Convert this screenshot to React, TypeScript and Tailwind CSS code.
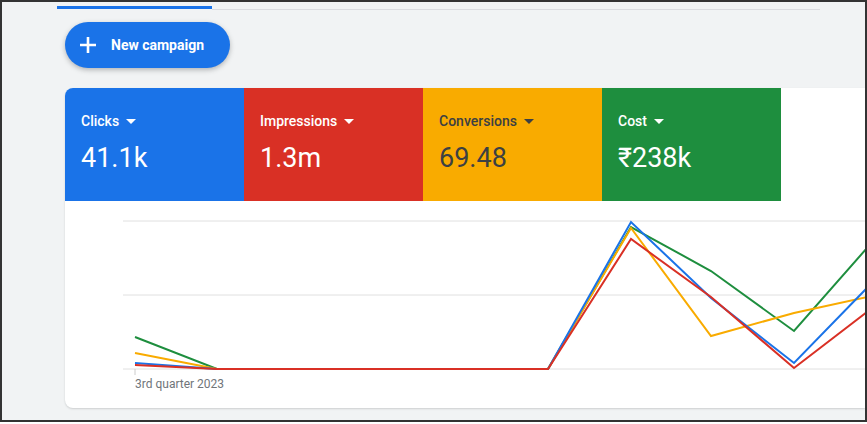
import React from "react";

const tiles = [
  { label: "Clicks", value: "41.1k", bg: "bg-[#1a73e8]", text: "text-white" },
  { label: "Impressions", value: "1.3m", bg: "bg-[#d93025]", text: "text-white" },
  { label: "Conversions", value: "69.48", bg: "bg-[#f9ab00]", text: "text-[#3c4043]" },
  { label: "Cost", value: "₹238k", bg: "bg-[#1e8e3e]", text: "text-white" },
];

const series = [
  { color: "#1e8e3e", pts: "70,136 152,168 483,168 566,26 646,70 729,130 802,47" },
  { color: "#f9ab00", pts: "70,152 152,168 483,168 566,27 646,135 729,112 802,96" },
  { color: "#1a73e8", pts: "70,162 152,168 483,168 566,21 646,97 729,162 802,87" },
  { color: "#d93025", pts: "70,164 152,168 483,168 566,38 646,96 729,167 802,111" },
];

function Caret() {
  return (
    <svg width="10" height="5" viewBox="0 0 10 5" className="ml-[7px] mt-[1px]">
      <path d="M0 0h10L5 5z" fill="currentColor" />
    </svg>
  );
}

export default function App() {
  return (
    <div className="h-[424px] w-[867px] bg-white font-['Roboto',sans-serif]">
      <div className="flex h-[422px] flex-col overflow-hidden border-2 border-[#333] bg-[#f1f3f4]">
        <div className="flex h-[10px] shrink-0">
          <div className="ml-[55px] mt-[4px] h-[3px] w-[155px] bg-[#1a73e8]" />
          <div className="mr-[45px] mt-[7px] h-px flex-1 bg-[#dadce0]" />
        </div>

        <button className="ml-[63px] mt-[10px] flex h-[46px] w-[165px] shrink-0 items-center rounded-full bg-[#1a73e8] pl-[14px] text-[14px] font-bold text-white shadow-[0_2px_5px_rgba(60,64,67,0.35)]">
          <svg width="18" height="18" viewBox="0 0 18 18">
            <path d="M9 1v16M1 9h16" stroke="white" strokeWidth="2.6" />
          </svg>
          <span className="ml-[14px]">New campaign</span>
        </button>

        <div className="ml-[63px] mt-[20px] h-[320px] shrink-0 overflow-hidden rounded-l-lg bg-white shadow-[0_1px_2px_rgba(60,64,67,0.2)]">
          <div className="flex h-[113px]">
            {tiles.map((t) => (
              <div key={t.label} className={`w-[179px] ${t.bg} ${t.text} pl-[16px] pt-[23px]`}>
                <div className="flex items-center text-[14px] font-medium leading-[20px]">
                  {t.label}
                  <Caret />
                </div>
                <div className="mt-[10px] text-[27px] leading-[34px]">{t.value}</div>
              </div>
            ))}
          </div>
          <div className="relative h-[207px]">
            <svg width="802" height="207" className="block">
              {[20, 94, 168].map((y) => (
                <line key={y} x1="58" x2="802" y1={y} y2={y} stroke="#e0e0e0" strokeWidth="1" />
              ))}
              <line x1="70" x2="70" y1="168" y2="174" stroke="#ccc" strokeWidth="1" />
              {series.map((s) => (
                <polyline key={s.color} points={s.pts} fill="none" stroke={s.color} strokeWidth="2" />
              ))}
            </svg>
            <div className="absolute left-[70px] top-[174px] text-[12px] text-[#70757a]">3rd quarter 2023</div>
          </div>
        </div>
      </div>
    </div>
  );
}
